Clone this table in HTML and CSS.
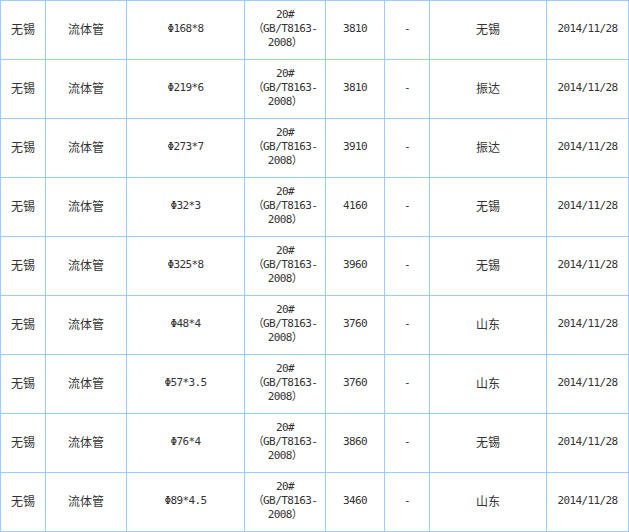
FILE: index.html
```html
<!DOCTYPE html>
<html>
<head>
<meta charset="utf-8">
<link rel="stylesheet" href="styles.css">
</head>
<body>
<table class="grid">
<colgroup>
<col class="c1"><col class="c2"><col class="c3"><col class="c4"><col class="c5"><col class="c6"><col class="c7"><col class="c8">
</colgroup>
<tbody>
<tr><td>无锡</td><td>流体管</td><td class="num">Φ168*8</td><td class="num">20#<br>（GB/T8163-<br>2008）</td><td class="num">3810</td><td class="num">-</td><td>无锡</td><td class="num">2014/11/28</td></tr>
<tr><td>无锡</td><td>流体管</td><td class="num">Φ219*6</td><td class="num">20#<br>（GB/T8163-<br>2008）</td><td class="num">3810</td><td class="num">-</td><td>振达</td><td class="num">2014/11/28</td></tr>
<tr><td>无锡</td><td>流体管</td><td class="num">Φ273*7</td><td class="num">20#<br>（GB/T8163-<br>2008）</td><td class="num">3910</td><td class="num">-</td><td>振达</td><td class="num">2014/11/28</td></tr>
<tr><td>无锡</td><td>流体管</td><td class="num">Φ32*3</td><td class="num">20#<br>（GB/T8163-<br>2008）</td><td class="num">4160</td><td class="num">-</td><td>无锡</td><td class="num">2014/11/28</td></tr>
<tr><td>无锡</td><td>流体管</td><td class="num">Φ325*8</td><td class="num">20#<br>（GB/T8163-<br>2008）</td><td class="num">3960</td><td class="num">-</td><td>无锡</td><td class="num">2014/11/28</td></tr>
<tr><td>无锡</td><td>流体管</td><td class="num">Φ48*4</td><td class="num">20#<br>（GB/T8163-<br>2008）</td><td class="num">3760</td><td class="num">-</td><td>山东</td><td class="num">2014/11/28</td></tr>
<tr><td>无锡</td><td>流体管</td><td class="num">Φ57*3.5</td><td class="num">20#<br>（GB/T8163-<br>2008）</td><td class="num">3760</td><td class="num">-</td><td>山东</td><td class="num">2014/11/28</td></tr>
<tr><td>无锡</td><td>流体管</td><td class="num">Φ76*4</td><td class="num">20#<br>（GB/T8163-<br>2008）</td><td class="num">3860</td><td class="num">-</td><td>无锡</td><td class="num">2014/11/28</td></tr>
<tr><td>无锡</td><td>流体管</td><td class="num">Φ89*4.5</td><td class="num">20#<br>（GB/T8163-<br>2008）</td><td class="num">3460</td><td class="num">-</td><td>山东</td><td class="num">2014/11/28</td></tr>
</tbody>
</table>
</body>
</html>
```
FILE: styles.css
```css
html, body {
  margin: 0;
  padding: 0;
  background: #ffffff;
}
.grid {
  border-collapse: collapse;
  table-layout: fixed;
  width: 629px;
  font-family: "Noto Sans CJK SC", "Liberation Sans", sans-serif;
  font-size: 12px;
  color: #333333;
}
.grid tr {
  height: 59px;
}
.grid td {
  border: 1px solid #99ccff;
  height: 56px;
  padding: 0 0 2px 0;
  text-align: center;
  vertical-align: middle;
  line-height: 14px;
  overflow: hidden;
}
.grid td.num {
  font-family: "DejaVu Sans Mono", "Noto Sans CJK SC", monospace;
  font-size: 11px;
  letter-spacing: -0.6px;
}
.c1 { width: 45px; }
.c2 { width: 81px; }
.c3 { width: 118px; }
.c4 { width: 81px; }
.c5 { width: 59px; }
.c6 { width: 45px; }
.c7 { width: 117px; }
.c8 { width: 82px; }
```
